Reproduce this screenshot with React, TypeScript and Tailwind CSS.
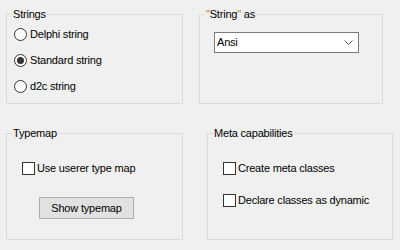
import React, { useState } from 'react';

const GroupBox: React.FC<{ title: React.ReactNode; className: string; children: React.ReactNode }> = ({ title, className, children }) => (
  <div className={`relative border border-[#dcdcdc] ${className}`}>
    <span className="absolute left-[5px] top-[-7px] px-[1px] bg-[#f0f0f0] leading-[13px]">{title}</span>
    {children}
  </div>
);

const Radio: React.FC<{ label: string; checked: boolean; onClick: () => void }> = ({ label, checked, onClick }) => (
  <div className="flex items-center h-[26px] cursor-default" onClick={onClick}>
    <span className="w-[13px] h-[13px] rounded-full border border-[#333333] bg-white flex items-center justify-center">
      {checked && <span className="w-[7px] h-[7px] rounded-full bg-[#333333]" />}
    </span>
    <span className="ml-[3px] leading-[13px]">{label}</span>
  </div>
);

const Check: React.FC<{ label: string }> = ({ label }) => {
  const [on, setOn] = useState(false);
  return (
    <div className="flex items-center h-[13px] cursor-default" onClick={() => setOn(!on)}>
      <span className="w-[13px] h-[13px] border border-[#333333] bg-white flex items-center justify-center">
        {on && (
          <svg width="9" height="9" viewBox="0 0 9 9" fill="none" stroke="#333" strokeWidth="1.5">
            <path d="M1 4.5l2.5 2.5L8 1.5" />
          </svg>
        )}
      </span>
      <span className="ml-[2px] leading-[13px]">{label}</span>
    </div>
  );
};

export default function App() {
  const [kind, setKind] = useState('standard');

  return (
    <div className="w-[400px] h-[250px] bg-[#f0f0f0] text-black text-[11px] tracking-[-0.2px] font-['Liberation_Sans',Arial,sans-serif] overflow-hidden">
      {/* top row */}
      <div className="flex pt-[14px] pl-[6px] gap-[16px]">
        <GroupBox title="Strings" className="w-[177px] h-[90px] pt-[6px] pl-[7px]">
          <Radio label="Delphi string" checked={kind === 'delphi'} onClick={() => setKind('delphi')} />
          <Radio label="Standard string" checked={kind === 'standard'} onClick={() => setKind('standard')} />
          <Radio label="d2c string" checked={kind === 'd2c'} onClick={() => setKind('d2c')} />
        </GroupBox>

        <GroupBox
          title={<><span className="text-[#c0782c]">"</span>String<span className="text-[#c0782c]">"</span> as</>}
          className="w-[184px] h-[90px] pt-[17px] pl-[14px]"
        >
          <div className="w-[145px] h-[21px] border border-[#7a7a7a] bg-white flex items-center justify-between pl-[2px] pr-[5px]">
            <span className="leading-[13px]">Ansi</span>
            <svg width="9" height="5" viewBox="0 0 9 5" fill="none" stroke="#555" strokeWidth="1">
              <path d="M0.5 0.5L4.5 4.5L8.5 0.5" />
            </svg>
          </div>
        </GroupBox>
      </div>

      {/* bottom row */}
      <div className="flex mt-[29px] pl-[6px] gap-[24px]">
        <GroupBox title="Typemap" className="w-[177px] h-[107px] pt-[28px] pl-[15px]">
          <Check label="Use userer type map" />
          <button className="mt-[22px] ml-[17px] w-[95px] h-[22px] bg-[#e1e1e1] border border-[#adadad] leading-[13px]">
            Show typemap
          </button>
        </GroupBox>

        <GroupBox title="Meta capabilities" className="w-[186px] h-[107px] pt-[28px] pl-[15px]">
          <div className="flex flex-col gap-[19px]">
            <Check label="Create meta classes" />
            <Check label="Declare classes as dynamic" />
          </div>
        </GroupBox>
      </div>
    </div>
  );
}
